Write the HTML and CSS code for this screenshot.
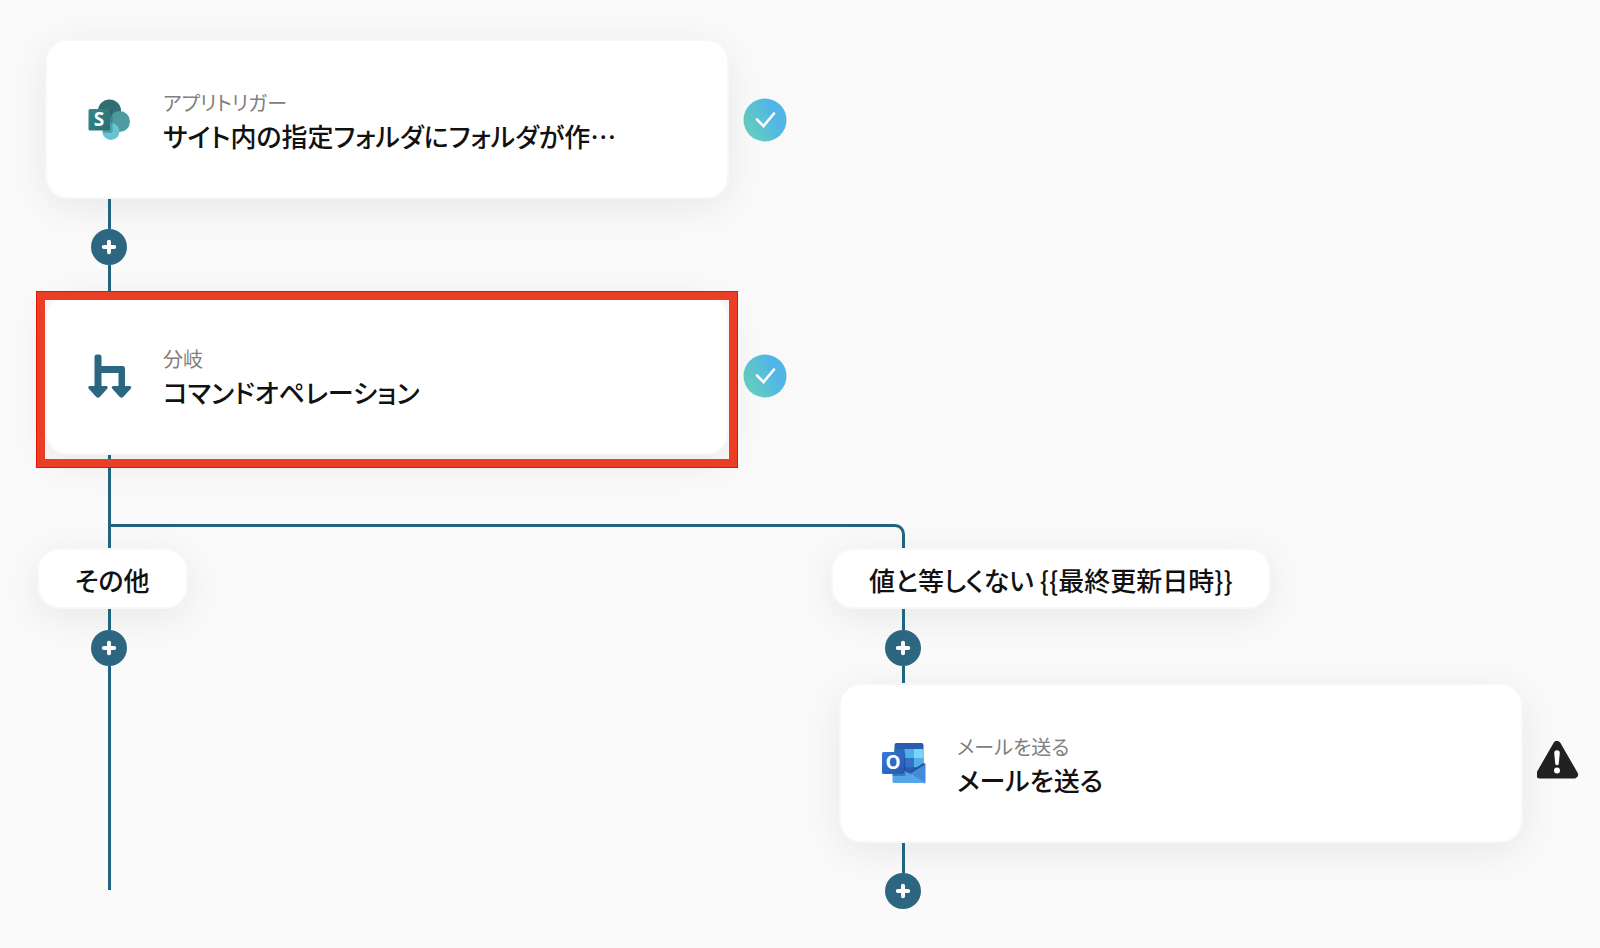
FILE: index.html
```html
<!DOCTYPE html>
<html lang="ja">
<head>
<meta charset="utf-8">
<title>フロー</title>
<meta name="viewport" content="width=device-width, initial-scale=1">
<link rel="stylesheet" href="styles.css">
</head>
<body>
<svg class="defs" aria-hidden="true">
  <defs>
    <linearGradient id="ok-fill" x1="0" y1="0.8" x2="1" y2="0.3">
      <stop offset="0" stop-color="#68d2bd"/>
      <stop offset="0.75" stop-color="#52b5e6"/>
    </linearGradient>
    <linearGradient id="sp-tile" x1="0" y1="0" x2="1" y2="1">
      <stop offset="0" stop-color="#36898c"/>
      <stop offset="1" stop-color="#2a6c70"/>
    </linearGradient>
    <linearGradient id="ol-tile" x1="0" y1="0" x2="1" y2="1">
      <stop offset="0" stop-color="#3579d6"/>
      <stop offset="1" stop-color="#2459b5"/>
    </linearGradient>
    <symbol id="plus" viewBox="0 0 36 36">
      <path d="M18 12.800v10.400M12.800 18h10.400" stroke="#fff" stroke-width="4" stroke-linecap="round"/>
    </symbol>
    <symbol id="ok" viewBox="0 0 44 44">
      <circle cx="22" cy="22" r="21.5" fill="url(#ok-fill)"/>
      <path d="M14 21.500l6.500 6.500 10.500-12.500" fill="none" stroke="#fff" stroke-width="2.600" stroke-linecap="round" stroke-linejoin="miter"/>
    </symbol>
  </defs>
</svg>
<main class="canvas">
  <section class="column">
    <div class="step">
      <article class="card">
        <svg class="card-icon" viewBox="0 0 44 44" aria-hidden="true">
          <circle cx="21.500" cy="13" r="11.500" fill="#2f6e73"/>
          <circle cx="31.500" cy="23.500" r="10.500" fill="#4c9ba0"/>
          <circle cx="23" cy="33.500" r="8.500" fill="#68c4d0"/>
          <path d="M10.500 11.500h12.500a1.500 1.500 0 0 1 1.500 1.500v20.500a1.500 1.500 0 0 1-1.500 1.500h-8.300a8.500 8.500 0 0 1 .2-4z" fill="#1f4f54" opacity=".3"/>
          <rect x="0.500" y="11" width="21.500" height="21.500" rx="1.500" fill="url(#sp-tile)"/>
          <text class="logo-letter" x="11" y="28">S</text>
        </svg>
        <div class="card-text">
          <p class="card-kind">アプリトリガー</p>
          <h2 class="card-title">サイト内の指定フォルダにフォルダが作…</h2>
        </div>
      </article>
      <svg class="status status-ok" role="img" aria-label="完了"><use href="#ok"/></svg>
    </div>
    <div class="stem stem-m"></div>
    <button class="add" type="button" aria-label="追加"><svg class="add-icon"><use href="#plus"/></svg></button>
    <div class="stem stem-m"></div>
    <div class="step">
      <article class="card card-selected">
        <svg class="card-icon" viewBox="0 0 44 44" aria-hidden="true">
          <g fill="#2d6680">
            <path d="M6.500 34V3a2.500 2.500 0 0 1 2.500-2.500h2A2.500 2.500 0 0 1 13.500 3v9H34.500a2.500 2.500 0 0 1 2.500 2.500V34h-6.500V19h-17V34z"/>
            <path d="M1.800 32h16.400c1.500 0 2 1.600 1 2.700l-7.500 8.200c-1 1.100-2.400 1.100-3.400 0L.8 34.700c-1-1.100-.5-2.700 1-2.700z"/>
            <path d="M25.300 32h16.400c1.500 0 2 1.600 1 2.700l-7.500 8.200c-1 1.100-2.400 1.100-3.400 0l-7.500-8.200c-1-1.100-.5-2.700 1-2.700z"/>
          </g>
        </svg>
        <div class="card-text">
          <p class="card-kind">分岐</p>
          <h2 class="card-title">コマンドオペレーション</h2>
        </div>
      </article>
      <svg class="status status-ok" role="img" aria-label="完了"><use href="#ok"/></svg>
    </div>
    <div class="stem stem-l"></div>
  </section>

  <section class="column branch-other">
    <div class="stem stem-branch"></div>
    <h3 class="pill">その他</h3>
    <div class="stem stem-s"></div>
    <button class="add" type="button" aria-label="追加"><svg class="add-icon"><use href="#plus"/></svg></button>
    <div class="stem stem-tail"></div>
  </section>

  <section class="column branch-match">
    <div class="elbow"></div>
    <h3 class="pill">値と等しくない {{最終更新日時}}</h3>
    <div class="stem stem-s"></div>
    <button class="add" type="button" aria-label="追加"><svg class="add-icon"><use href="#plus"/></svg></button>
    <div class="stem stem-xs"></div>
    <div class="step">
      <article class="card">
        <svg class="card-icon" viewBox="0 0 44 44" aria-hidden="true">
          <rect x="12.500" y="1" width="29" height="32" rx="2" fill="#285db0"/>
          <path d="M12.500 7h10v9h-10z" fill="#2c68bd"/>
          <path d="M22.500 7h9.500v9h-9.500z" fill="#51aeea"/>
          <path d="M32 7h9.500v9H32z" fill="#79d4fa"/>
          <path d="M22.500 16h9.500v9.500h-9.500z" fill="#3172c8"/>
          <path d="M32 16h9.500v9.500H32z" fill="#50aee9"/>
          <path d="M22 25.500h20l-14 7z" fill="#285db0"/>
          <path d="M43.500 21.500V40a1.500 1.500 0 0 1-1.500 1.500L27 31z" fill="#428bd9"/>
          <path d="M10.500 22l32.500 18.500a1.500 1.500 0 0 1-1 .5H12a1.500 1.500 0 0 1-1.500-1.500z" fill="#54a6e6"/>
          <path d="M41.500 21l2 1-14.500 9-1.500-1z" fill="#234f96"/>
          <path d="M11 10.500h11a1.500 1.500 0 0 1 1.500 1.500v20.500a1.500 1.500 0 0 1-1.500 1.500H10.500z" fill="#173d78" opacity=".4"/>
          <rect x="0" y="10" width="22" height="22" rx="1.500" fill="url(#ol-tile)"/>
          <text class="logo-letter" x="11" y="27">O</text>
        </svg>
        <div class="card-text">
          <p class="card-kind">メールを送る</p>
          <h2 class="card-title">メールを送る</h2>
        </div>
      </article>
      <svg class="status" viewBox="0 0 44 44" role="img" aria-label="警告">
        <path d="M20 4L37 33.500H3z" fill="#212121" stroke="#212121" stroke-width="8" stroke-linejoin="round"/>
        <path d="M17.200 12a2.800 2.800 0 0 1 5.600 0l-1 10.500a1.800 1.800 0 0 1-3.600 0z" fill="#fff"/>
        <circle cx="20" cy="29.500" r="3" fill="#fff"/>
      </svg>
    </div>
    <div class="stem stem-m"></div>
    <button class="add" type="button" aria-label="追加"><svg class="add-icon"><use href="#plus"/></svg></button>
  </section>
</main>
</body>
</html>
```
FILE: styles.css
```css
* {
  box-sizing: border-box;
}

body {
  margin: 0;
  background: #fafafa;
  color: #111;
  font-family: "Noto Sans CJK JP", "Noto Sans", sans-serif;
  font-feature-settings: "palt";
}

h2,
h3,
p {
  margin: 0;
}

.defs {
  position: absolute;
  width: 0;
  height: 0;
}

.canvas {
  display: grid;
  grid-template-columns: 1fr 1fr;
  column-gap: 44px;
  padding: 39px 19px 39px 37px;
}

.column {
  display: flex;
  flex-direction: column;
  align-items: flex-start;
  min-width: 0;
}

.branch-other {
  grid-column: 1;
  grid-row: 2;
}

.branch-match {
  grid-column: 2;
  grid-row: 2;
}

.step {
  display: flex;
  align-items: center;
  align-self: stretch;
  gap: 14px;
  padding-left: 8px;
}

.card {
  position: relative;
  display: flex;
  flex: 1;
  align-items: center;
  gap: 31px;
  min-width: 0;
  min-height: 160px;
  padding: 41px 41px 39px;
  border: 2px solid #f7f7f7;
  border-radius: 22px;
  background: #fff;
  box-shadow: 0 8px 40px rgba(0, 0, 0, 0.08);
}

.card-selected::after {
  content: "";
  position: absolute;
  inset: -6px -11px -15px -11px;
  border: 9px solid #eb3f25;
  outline: 1px solid #e5140a;
  outline-offset: -1px;
  z-index: 2;
  pointer-events: none;
}

.card-icon {
  flex: none;
  width: 44px;
  height: 44px;
}

.logo-letter {
  fill: #fff;
  font-family: "Open Sans", "Noto Sans", sans-serif;
  font-size: 19px;
  font-weight: 700;
  text-anchor: middle;
}

.card-kind {
  color: #808080;
  font-size: 20px;
  font-weight: 400;
  line-height: 32px;
}

.card-title {
  font-size: 26px;
  font-weight: 500;
  line-height: 34px;
  white-space: nowrap;
}

.status {
  flex: none;
  width: 44px;
  height: 44px;
}

.status-ok {
  margin-top: 2px;
}

.pill {
  padding: 13px 36px 10px;
  border: 2px solid #f7f7f7;
  border-radius: 22px;
  background: #fff;
  box-shadow: 0 8px 40px rgba(0, 0, 0, 0.08);
  font-size: 26px;
  font-weight: 500;
  line-height: 34px;
}

.stem {
  position: relative;
  z-index: 1;
  width: 3px;
  margin-left: 71px;
  background: #1f6480;
}

.stem-xs {
  height: 17px;
}

.stem-s {
  height: 21px;
}

.stem-m {
  height: 30px;
}

.stem-l {
  height: 69px;
}

.stem-branch {
  height: 24px;
}

.stem-tail {
  height: 224px;
}

.elbow {
  width: calc(100% + 44px);
  height: 24px;
  margin-left: calc(30px - 100%);
  border: 3px solid #1f6480;
  border-width: 3px 3px 0 0;
  border-top-right-radius: 10px;
}

.add {
  position: relative;
  z-index: 1;
  width: 36px;
  height: 36px;
  margin-left: 54px;
  padding: 0;
  border: 0;
  border-radius: 50%;
  background: #2d6680;
  cursor: pointer;
}

.add-icon {
  display: block;
  width: 36px;
  height: 36px;
}
```
